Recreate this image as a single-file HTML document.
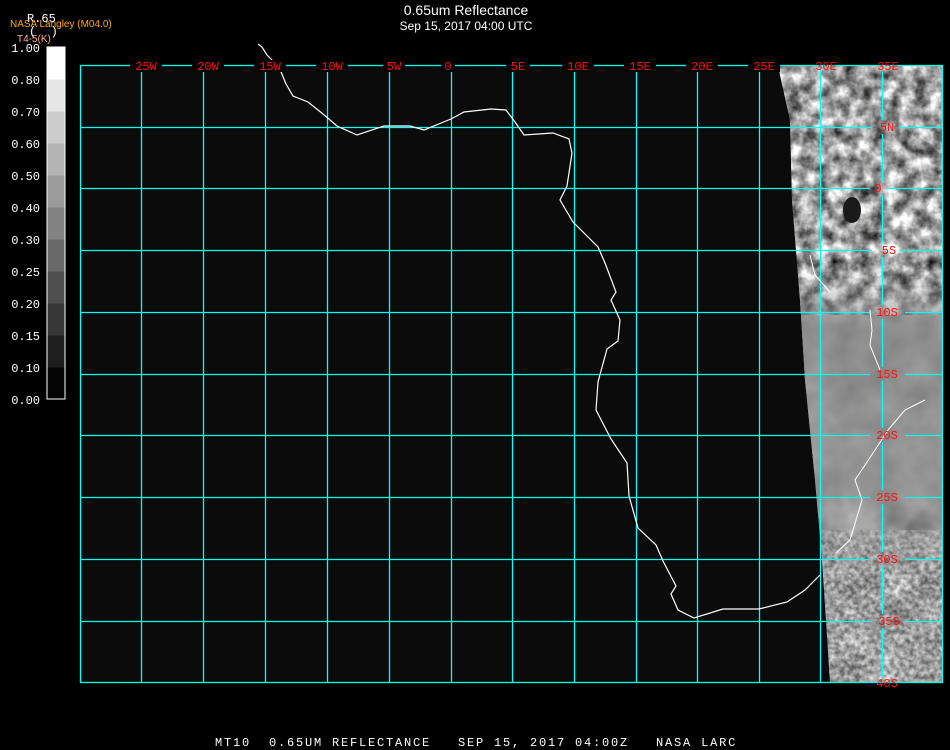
<!DOCTYPE html>
<html><head><meta charset="utf-8"><style>
body{margin:0;background:#000;width:950px;height:750px;overflow:hidden;position:relative;font-family:"Liberation Mono",monospace}
</style></head><body>
<svg width="950" height="750" style="position:absolute;left:0;top:0">
<defs>
<filter id="n1" x="0" y="0" width="100%" height="100%" color-interpolation-filters="sRGB">
<feTurbulence type="fractalNoise" baseFrequency="0.07" numOctaves="4" seed="3"/>
<feColorMatrix type="matrix" values="1.4 0 0 0 -0.08 1.4 0 0 0 -0.08 1.4 0 0 0 -0.08 0 0 0 0 1"/>
</filter>
<filter id="n3" x="0" y="0" width="100%" height="100%" color-interpolation-filters="sRGB">
<feTurbulence type="fractalNoise" baseFrequency="0.03" numOctaves="3" seed="11"/>
<feColorMatrix type="matrix" values="0.8 0 0 0 0.18 0.8 0 0 0 0.18 0.8 0 0 0 0.18 0 0 0 0 1"/>
</filter>
<filter id="n2" x="0" y="0" width="100%" height="100%" color-interpolation-filters="sRGB">
<feTurbulence type="fractalNoise" baseFrequency="0.2" numOctaves="2" seed="7"/>
<feColorMatrix type="matrix" values="1.3 0 0 0 0.0 1.3 0 0 0 0.0 1.3 0 0 0 0.0 0 0 0 0 1"/>
</filter>
<linearGradient id="mid" x1="0" y1="0" x2="0" y2="1">
<stop offset="0" stop-color="#8c8c8c" stop-opacity="0"/>
<stop offset="0.2" stop-color="#8c8c8c" stop-opacity="0.8"/>
<stop offset="0.75" stop-color="#959595" stop-opacity="0.8"/>
<stop offset="1" stop-color="#a0a0a0" stop-opacity="0"/>
</linearGradient>
<linearGradient id="e" x1="0" y1="0" x2="1" y2="0">
<stop offset="0" stop-color="#fff" stop-opacity="0.85"/>
<stop offset="0.22" stop-color="#fff" stop-opacity="0"/>
</linearGradient>
<clipPath id="c"><polygon points="778,66 790,120 792,200 800,300 805,380 815,480 822,560 826,620 830,683 943,683 943,66"/></clipPath>
</defs>
<rect x="80" y="65" width="863" height="618" fill="#0b0b0b"/>
<g clip-path="url(#c)">
<rect x="770" y="65" width="180" height="620" filter="url(#n3)"/>
<rect x="770" y="65" width="180" height="250" filter="url(#n1)"/>
<g opacity="0.55"><rect x="770" y="530" width="180" height="160" filter="url(#n2)"/></g>
<rect x="770" y="270" width="180" height="300" fill="url(#mid)"/>
<rect x="775" y="280" width="120" height="405" fill="url(#e)"/>
<ellipse cx="852" cy="210" rx="9" ry="13" fill="#1a1a1a"/>
</g>
<g stroke="#00ffff" stroke-width="1.3" fill="none">
<rect x="80.5" y="65.5" width="862" height="617"/>
<path d="M141.5 65V683M203.5 65V683M265.5 65V683M327.5 65V683M389.5 65V683M451.5 65V683M512.5 65V683M574.5 65V683M636.5 65V683M697.5 65V683M759.5 65V683M820.5 65V683M882.5 72V120M882.5 134V181M882.5 195V243M882.5 257V305M882.5 319V367M882.5 381V428M882.5 442V490M882.5 504V552M882.5 566V614M882.5 628V677"/>
<path d="M80 127.5H872M900 127.5H943M80 188.5H870M888 188.5H943M80 250.5H872M900 250.5H943M80 312.5H870M905 312.5H943M80 374.5H870M905 374.5H943M80 435.5H870M905 435.5H943M80 497.5H870M905 497.5H943M80 559.5H870M905 559.5H943M80 621.5H872M905 621.5H943"/>
</g>
<polyline fill="none" stroke="#fff" stroke-width="1.2" points="258,44 262,47 267,55 279,67 286,84 293,96 308,102 323,114 337,126 357,135 384,126 410,126 424,130 451,119 464,112 491,109 506,110 515,122 524,135 553,133 569,139 572,153 567,186 560,200 573,222 598,247 605,263 616,292 611,300 620,320 618,341 607,349 598,382 596,410 611,439 627,463 629,496 638,528 656,545 663,561 676,586 671,594 678,610 694,618 723,609 759,609 787,602 805,590 820,575"/>
<g fill="none" stroke="#fff" stroke-width="1">
<polyline points="836,553 850,540 856,520 862,500 855,480 875,450 888,430 905,410 925,400"/>
<polyline points="870,310 872,330 870,345 880,370"/>
<polyline points="810,255 815,275 830,292"/>
</g>
<g fill="#000">
<rect x="130" y="60" width="32" height="12"/><rect x="192" y="60" width="32" height="12"/><rect x="254" y="60" width="32" height="12"/><rect x="316" y="60" width="32" height="12"/><rect x="383" y="60" width="22" height="12"/><rect x="441" y="60" width="14" height="12"/><rect x="506" y="60" width="24" height="12"/><rect x="562" y="60" width="32" height="12"/><rect x="624" y="60" width="32" height="12"/><rect x="686" y="60" width="32" height="12"/><rect x="748" y="60" width="32" height="12"/>
</g>
<g font-family="Liberation Mono,monospace" font-size="12" fill="#ff1010" text-anchor="middle">
<text x="146" y="70">25W</text><text x="208" y="70">20W</text><text x="270" y="70">15W</text><text x="332" y="70">10W</text><text x="394" y="70">5W</text><text x="448" y="70">0</text><text x="518" y="70">5E</text><text x="578" y="70">10E</text><text x="640" y="70">15E</text><text x="702" y="70">20E</text><text x="764" y="70">25E</text><text x="826" y="70">30E</text><text x="888" y="70">35E</text>
<text x="887" y="131">5N</text><text x="878" y="192">0</text><text x="889" y="254">5S</text><text x="887" y="316">10S</text><text x="887" y="378">15S</text><text x="887" y="439">20S</text><text x="887" y="501">25S</text><text x="887" y="563">30S</text><text x="889" y="625">35S</text><text x="887" y="687">40S</text>
</g>
<rect x="47" y="47" width="18" height="352" fill="#000" stroke="#fff"/>
<rect x="47.5" y="47.5" width="17" height="32" fill="#fff"/>
<rect x="47.5" y="79.5" width="17" height="32" fill="#e6e6e6"/>
<rect x="47.5" y="111.5" width="17" height="32" fill="#cdcdcd"/>
<rect x="47.5" y="143.5" width="17" height="32" fill="#b4b4b4"/>
<rect x="47.5" y="175.5" width="17" height="32" fill="#9b9b9b"/>
<rect x="47.5" y="207.5" width="17" height="32" fill="#828282"/>
<rect x="47.5" y="239.5" width="17" height="32" fill="#696969"/>
<rect x="47.5" y="271.5" width="17" height="32" fill="#505050"/>
<rect x="47.5" y="303.5" width="17" height="32" fill="#373737"/>
<rect x="47.5" y="335.5" width="17" height="32" fill="#1e1e1e"/>
<rect x="47.5" y="367.5" width="17" height="31" fill="#050505"/>
<g font-family="Liberation Mono,monospace" font-size="12" fill="#fff" text-anchor="end">
<text x="40" y="52">1.00</text><text x="40" y="84">0.80</text><text x="40" y="116">0.70</text><text x="40" y="148">0.60</text><text x="40" y="180">0.50</text><text x="40" y="212">0.40</text><text x="40" y="244">0.30</text><text x="40" y="276">0.25</text><text x="40" y="308">0.20</text><text x="40" y="340">0.15</text><text x="40" y="372">0.10</text><text x="40" y="404">0.00</text>
</g>
<text x="27" y="22" font-family="Liberation Mono,monospace" font-size="12" fill="#fff">R.65</text>
<text x="29" y="35" font-family="Liberation Mono,monospace" font-size="12" fill="#fff" xml:space="preserve">(  )</text>
<text x="10" y="27" font-family="Liberation Sans,sans-serif" font-size="10" fill="#ffaa00">NASA Langley (M04.0)</text>
<text x="17" y="42" font-family="Liberation Sans,sans-serif" font-size="10" fill="#ffb090">T4-5(K)</text>
<text x="466" y="15" font-family="Liberation Sans,sans-serif" font-size="14" fill="#fff" text-anchor="middle">0.65um Reflectance</text>
<text x="466" y="30" font-family="Liberation Sans,sans-serif" font-size="12" fill="#fff" text-anchor="middle">Sep 15, 2017 04:00 UTC</text>
<text x="215" y="746" font-family="Liberation Mono,monospace" font-size="12" fill="#fff" letter-spacing="1.8" xml:space="preserve" style="white-space:pre">MT10  0.65UM REFLECTANCE   SEP 15, 2017 04:00Z   NASA LARC</text>
</svg>
</body></html>
